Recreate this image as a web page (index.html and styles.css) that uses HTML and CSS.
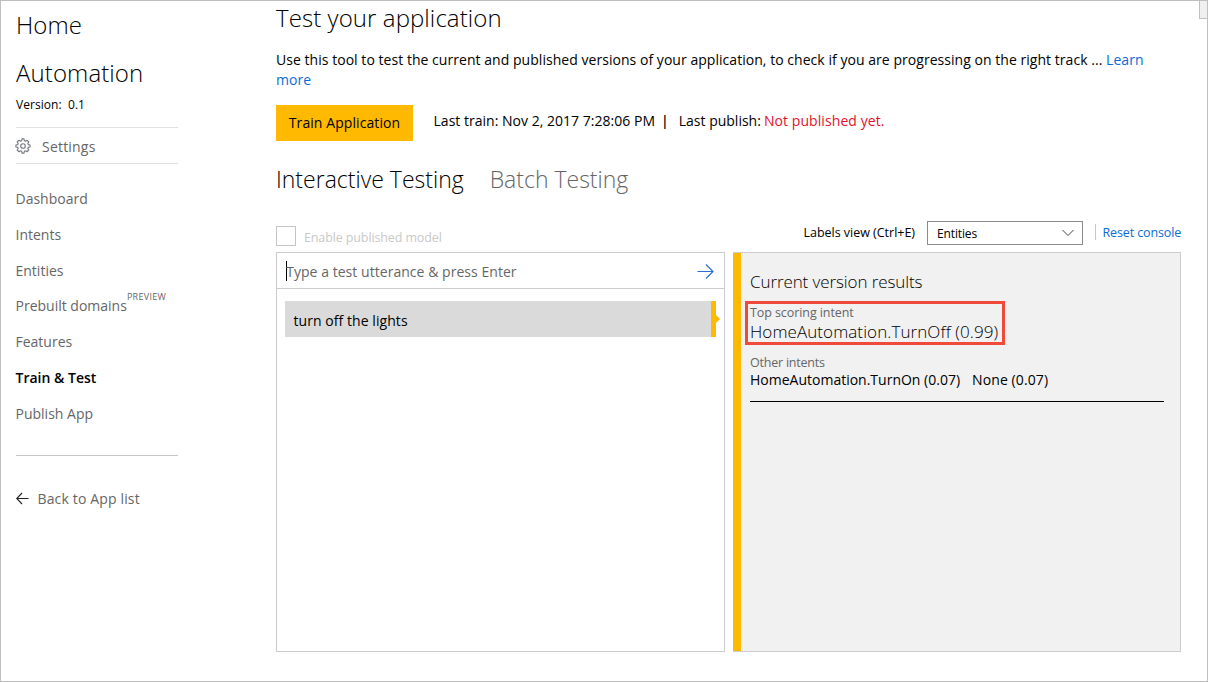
FILE: index.html
```
<!DOCTYPE html>
<html lang="en">
<head>
<meta charset="utf-8">
<title>Test your application</title>
<link rel="stylesheet" href="styles.css">
</head>
<body>
<div class="window">
  <aside class="sidebar">
    <h2 class="app-name">Home Automation</h2>
    <div class="version">Version:&nbsp; 0.1</div>
    <a class="settings">
      <svg width="16" height="16" viewBox="0 0 16 16" fill="none" stroke="#75797f" stroke-width="1.100" stroke-linejoin="round">
        <path d="M6.600 2.800 7 .9h2l.4 1.900 1 .4L12 2.200 13.800 4l-1 1.600.4 1 1.900.4v2l-1.900.4-.4 1 1 1.600-1.800 1.800-1.600-1-1 .4L9 15.100H7l-.4-1.900-1-.4-1.600 1L2.200 12l1-1.600-.4-1L.9 9V7l1.900-.4.4-1L2.200 4 4 2.200l1.600 1z"/>
        <circle cx="8" cy="8" r="2.300"/>
      </svg>
      <span>Settings</span>
    </a>
    <nav class="nav">
      <a>Dashboard</a>
      <a>Intents</a>
      <a class="short">Entities</a>
      <a>Prebuilt domains<span class="tag">PREVIEW</span></a>
      <a>Features</a>
      <a class="active">Train &amp; Test</a>
      <a>Publish App</a>
    </nav>
    <a class="back">
      <svg width="14" height="14" viewBox="0 0 14 14" fill="none" stroke="#222" stroke-width="1.100"><path d="M12.500 6.500H.7M6 1 .7 6.500 6 12"/></svg>
      <span>Back to App list</span>
    </a>
  </aside>

  <main class="main">
    <h1 class="title">Test your application</h1>
    <p class="intro">Use this tool to test the current and published versions of your application, to check if you are progressing on the right track ... <a class="link">Learn<br>more</a></p>
    <div class="train">
      <button class="train-btn">Train Application</button>
      <div class="status"><span class="last-train">Last train: Nov 2, 2017 7:28:06 PM</span><b>|</b><span>Last publish:</span><span class="error">Not published yet.</span></div>
    </div>
    <div class="tabs"><a class="current">Interactive Testing</a><a>Batch Testing</a></div>

    <div class="toolbar">
      <label class="published"><span class="box"></span><span>Enable published model</span></label>
      <div class="tools">
        <span class="labels">Labels view (Ctrl+E)</span>
        <div class="select"><span>Entities</span>
          <svg width="12" height="8" viewBox="0 0 12 8" fill="none" stroke="#444" stroke-width="1"><path d="M.5 1 6 6.500 11.500 1"/></svg>
        </div>
        <a class="reset">Reset console</a>
      </div>
    </div>

    <div class="console">
      <section class="utterances">
        <div class="entry"><span class="placeholder">Type a test utterance &amp; press Enter</span>
          <svg width="18" height="16" viewBox="0 0 18 16" fill="none" stroke="#2a6fd6" stroke-width="1.200"><path d="M.5 8.500H16M9 1.500l7 7-7 7"/></svg>
        </div>
        <div class="utterance">turn off the lights</div>
      </section>
      <section class="results">
        <h3 class="results-title">Current version results</h3>
        <div class="top-intent">
          <div class="caption">Top scoring intent</div>
          <div class="top-name">HomeAutomation.TurnOff (0.99)</div>
        </div>
        <div class="others">
          <div class="caption">Other intents</div>
          <div class="other-list"><span>HomeAutomation.TurnOn (0.07)</span><span class="none">None (0.07)</span></div>
        </div>
      </section>
    </div>
  </main>
  <div class="scroll-corner"></div>
</div>
</body>
</html>
```
FILE: styles.css
```
* { box-sizing: border-box; }
body {
  margin: 0;
  font: 14px/20px "Open Sans", "Noto Sans", sans-serif;
  color: #000;
  background: #fff;
}
h1, h2, h3, p { margin: 0; font-weight: 300; }
svg { display: block; flex: none; }
.window {
  display: flex;
  position: relative;
  width: 1208px;
  height: 682px;
  border: 1px solid #bfbfbf;
  overflow: hidden;
}

.sidebar { width: 163px; padding-left: 1px; margin-left: 14px; flex: none; color: #666; }
.app-name { color: #000; font-size: 24px; line-height: 48px; width: 140px; letter-spacing: .1px; }
.version { color: #000; font-size: 12px; line-height: 18px; margin-top: -1px; margin-bottom: 13px; letter-spacing: .05px; }
.settings {
  display: flex;
  align-items: center;
  gap: 11px;
  height: 37px;
  border-top: 1px solid #e1e1e1;
  border-bottom: 1px solid #e1e1e1;
  letter-spacing: .2px;
}
.settings svg { margin-left: -1px; }
.settings span { padding-top: 2px; }
.nav { padding-top: 17px; height: 292px; border-bottom: 1px solid #c8c8c8; }
.nav a { display: block; height: 36px; line-height: 36px; white-space: nowrap; text-indent: -.5px; }
.nav .short { height: 35px; }
.nav .active { color: #000; font-weight: 600; }
.tag { font-size: 9px; letter-spacing: .3px; vertical-align: 11px; line-height: 1; }
.back { display: flex; align-items: center; gap: 7.500px; height: 36px; margin-top: 25px; letter-spacing: .15px; }

.main { width: 905px; margin-left: 98px; flex: none; }
.title { font-size: 24px; line-height: 32px; margin-top: 1px; letter-spacing: .08px; }
.intro { font-weight: 400; margin-top: 16px; white-space: nowrap; letter-spacing: .04px; }
.link, .reset { color: #0a6cd6; }
.train { display: flex; margin-top: 15px; }
.train-btn {
  width: 137px;
  height: 36px;
  padding: 0;
  border: 0;
  background: #ffb900;
  font: inherit;
  letter-spacing: .08px;
}
.status { display: flex; margin-left: 20.500px; line-height: 32px; white-space: pre; }
.last-train { letter-spacing: .02px; }
.status b { margin: 0 10px 0 6px; font-weight: 600; }
.error { color: #e3112d; margin-left: 3px; letter-spacing: .08px; }
.tabs { display: flex; gap: 26px; margin-top: 21px; font-size: 23px; font-weight: 300; line-height: 34px; color: #666; }
.tabs .current { color: #000; }

.toolbar { display: flex; justify-content: space-between; height: 31px; margin-top: 25px; font-size: 12.5px; }
.published { display: flex; gap: 8px; padding-top: 5px; color: #c9c9c9; letter-spacing: -.12px; line-height: 24px; }
.box { width: 20px; height: 20px; border: 1px solid #c4c4c4; }
.tools { display: flex; line-height: 23px; }
.labels { letter-spacing: -.02px; }
.select {
  display: flex;
  align-items: center;
  justify-content: space-between;
  width: 156px;
  height: 24px;
  margin: 0 12px;
  padding: 0 8px 0 9px;
  border: 1px solid #8a8a8a;
  background: #fff;
  font-size: 12px;
  letter-spacing: -.14px;
}
.reset { position: relative; width: 86px; padding-left: 7.500px; letter-spacing: -.12px; white-space: nowrap; }
.reset::before { content: ""; position: absolute; left: 0; top: 3px; height: 16px; width: 1px; background: #c8c8c8; }

.console { display: flex; gap: 8px; height: 400px; }
.utterances { width: 449px; border: 1px solid #ccc; }
.entry {
  display: flex;
  align-items: center;
  justify-content: space-between;
  height: 36px;
  padding: 0 9px;
  border-bottom: 1px solid #ccc;
  color: #666;
}
.placeholder { border-left: 1px solid #000; line-height: 19px; padding-top: 1px; letter-spacing: .04px; text-indent: -.8px; }
.utterance {
  position: relative;
  width: 431px;
  height: 36px;
  margin: 12px 0 0 8px;
  padding: 1px 0 0 8.500px;
  line-height: 37px;
  letter-spacing: .06px;
  background: #dadada;
  border-right: 5px solid #ffb900;
}
.utterance::after {
  content: "";
  position: absolute;
  right: -9px;
  top: 14px;
  border: 4px solid transparent;
  border-left-color: #ffb900;
  border-right: 0;
}
.results {
  width: 448px;
  padding: 16px 16px 0 0;
  background: #f1f1f1;
  border: solid #ccc;
  border-width: 1px 1px 1px 0;
  padding-left: 17px;
  box-shadow: inset 8px 0 #ffb900;
}
.results-title { font-size: 17px; line-height: 26px; letter-spacing: -.1px; }
.top-intent { width: 260px; height: 44px; margin: 6px 0 0 -5px; padding-left: 2px; border: 3px solid #f04a3a; }
.caption { font-size: 12.5px; line-height: 17px; color: #666; letter-spacing: -.08px; }
.top-name { font-size: 17px; font-weight: 300; line-height: 22px; letter-spacing: .09px; white-space: nowrap; }
.others { margin-top: 9px; height: 48px; border-bottom: 1px solid #000; }
.others .caption { letter-spacing: -.22px; }
.other-list { line-height: 18px; white-space: nowrap; }
.none { margin-left: 12px; letter-spacing: .1px; }
.scroll-corner { position: absolute; right: 0; top: 0; width: 8px; height: 18px; background: #f0f0f0; border: 1px solid #c0c0c0; border-width: 0 0 1px 1px; }
```
